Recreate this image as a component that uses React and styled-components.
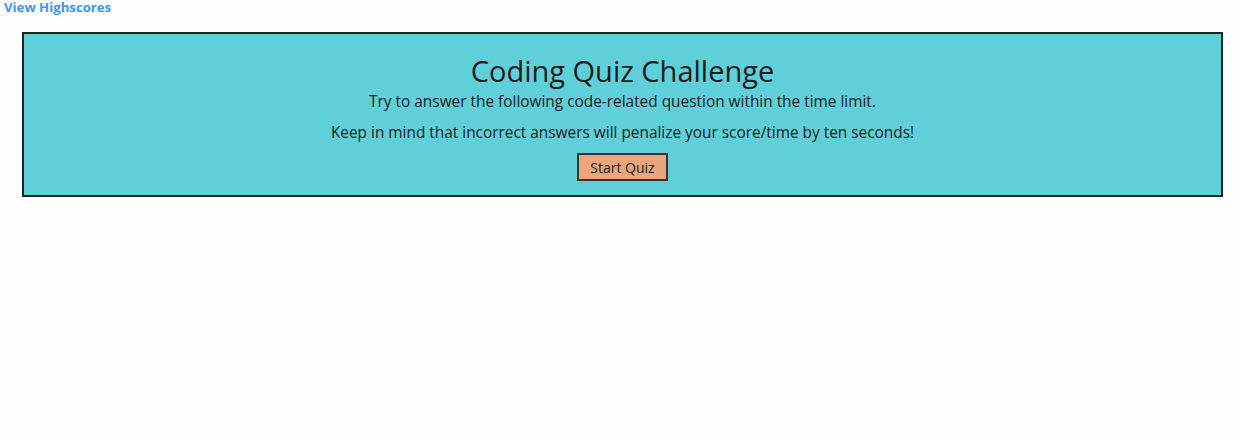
import React from "react";
import styled, { createGlobalStyle } from "styled-components";

const Global = createGlobalStyle`
  html, body { margin: 0; padding: 0; background: #fefefe; }
  body { font-family: "Open Sans", "Noto Sans", sans-serif; color: #1b1b1b; }
`;

const Page = styled.div`
  display: flex;
  flex-direction: column;
  padding: 0 16px 0 4px;
`;

const HighscoreLink = styled.a`
  align-self: flex-start;
  font-size: 13.2px;
  line-height: 14px;
  font-weight: 700;
  color: #3b95f5;
  text-decoration: none;
  cursor: pointer;
`;

const Card = styled.section`
  margin: 18px 0 0 18px;
  height: 165px;
  box-sizing: border-box;
  border: 2px solid #222;
  background: #5fd0d9;
  display: flex;
  flex-direction: column;
  align-items: center;
  padding-top: 19px;
`;

const Title = styled.h1`
  margin: 0;
  font-size: 29px;
  line-height: 36px;
  font-weight: 500;
`;

const Text = styled.p`
  margin: ${(p) => p.$mt || 0}px 0 0;
  font-size: 15.4px;
  line-height: 20px;
`;

const StartButton = styled.button`
  margin-top: 10px;
  width: 91px;
  height: 28px;
  background: #eca47c;
  border: 2px solid #333;
  font-family: inherit;
  font-size: 14px;
  color: #1b1b1b;
  padding: 0;
  cursor: pointer;
`;

export default function App() {
  return (
    <>
      <Global />
      <Page>
        <HighscoreLink>View Highscores</HighscoreLink>
        <Card>
          <Title>Coding Quiz Challenge</Title>
          <Text $mt={3}>Try to answer the following code-related question within the time limit.</Text>
          <Text $mt={11}>Keep in mind that incorrect answers will penalize your score/time by ten seconds!</Text>
          <StartButton>Start Quiz</StartButton>
        </Card>
      </Page>
    </>
  );
}
